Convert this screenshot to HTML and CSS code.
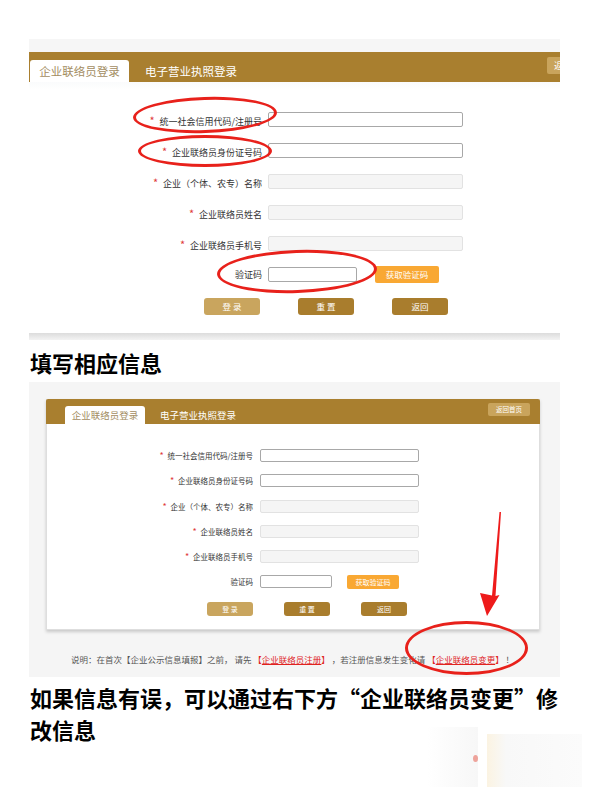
FILE: index.html
```html
<!DOCTYPE html>
<html lang="zh-CN">
<head>
  <meta charset="UTF-8">
  <meta name="viewport" content="width=device-width, initial-scale=1.0">
  <title>企业联络员登录</title>
  <link rel="stylesheet" href="styles.css">
</head>
<body>
  <div class="page">

    <!-- first screenshot: login form -->
    <div class="shot login">
      <div class="login-top"></div>
      <div class="bar">
        <div class="tab active">企业联络员登录</div>
        <div class="tab">电子营业执照登录</div>
        <div class="bar-btn">返回首页</div>
      </div>
      <div class="form">
        <div class="row"><label><i>*</i>统一社会信用代码/注册号</label><span class="field"></span></div>
        <div class="row"><label><i>*</i>企业联络员身份证号码</label><span class="field"></span></div>
        <div class="row"><label><i>*</i>企业（个体、农专）名称</label><span class="field off"></span></div>
        <div class="row"><label><i>*</i>企业联络员姓名</label><span class="field off"></span></div>
        <div class="row"><label><i>*</i>企业联络员手机号</label><span class="field off"></span></div>
        <div class="row"><label>验证码</label><span class="field short"></span><span class="code-btn">获取验证码</span></div>
        <div class="actions">
          <span class="btn light">登 录</span>
          <span class="btn">重 置</span>
          <span class="btn">返回</span>
        </div>
      </div>
      <div class="login-bottom"></div>

      <span class="ring ring-a"></span>
      <span class="ring ring-b"></span>
      <span class="ring ring-c"></span>
    </div>

    <h2 class="caption first">填写相应信息</h2>

    <!-- second screenshot: card with note -->
    <div class="shot panel">
      <div class="card">
        <div class="bar">
          <div class="tab active">企业联络员登录</div>
          <div class="tab">电子营业执照登录</div>
          <div class="bar-btn">返回首页</div>
        </div>
        <div class="form">
          <div class="row"><label><i>*</i>统一社会信用代码/注册号</label><span class="field"></span></div>
          <div class="row"><label><i>*</i>企业联络员身份证号码</label><span class="field"></span></div>
          <div class="row"><label><i>*</i>企业（个体、农专）名称</label><span class="field off"></span></div>
          <div class="row"><label><i>*</i>企业联络员姓名</label><span class="field off"></span></div>
          <div class="row"><label><i>*</i>企业联络员手机号</label><span class="field off"></span></div>
          <div class="row"><label>验证码</label><span class="field short"></span><span class="code-btn">获取验证码</span></div>
          <div class="actions">
            <span class="btn light">登 录</span>
            <span class="btn">重 置</span>
            <span class="btn">返回</span>
          </div>
        </div>
      </div>
      <p class="note">说明：在首次【企业公示信息填报】之前， 请先 <span class="link">【<u>企业联络员注册</u>】</span> ，若注册信息发生变化请 <span class="link">【<u>企业联络员变更</u>】</span> ！</p>

      <svg class="arrow" width="60" height="115" viewBox="0 0 60 115">
        <polygon points="51,7 45.5,91 49.5,90 37,111 30,88 42,90.5 49.5,7" fill="#ee1b1b"/>
      </svg>
      <span class="ring ring-d"></span>
    </div>

    <h2 class="caption">如果信息有误，可以通过右下方“企业联络员变更”修<br>改信息</h2>

    <div class="photo">
      <div class="photo-a"><span class="dot"></span></div>
      <div class="photo-b"></div>
    </div>

  </div>
</body>
</html>
```

FILE: styles.css
```css
body {
  margin: 0;
  background-color: #fff;
  color: #333;
  font-family: "Noto Sans CJK SC", "Liberation Sans", sans-serif;
}
.page {
  width: 531px;
  padding: 39px 0 0 29px;
}
.shot {
  position: relative;
}
.bar {
  display: flex;
  align-items: flex-end;
  background-color: #a97f2f;
}
.tab {
  color: #fff;
  white-space: nowrap;
}
.tab.active {
  background-color: #fff;
  color: #a38d62;
  text-align: center;
  border-radius: 3px 3px 0 0;
}
.bar-btn {
  align-self: flex-start;
  margin-left: auto;
  background-color: #c9a45c;
  color: #fff;
  text-align: center;
  border-radius: 2px;
  white-space: nowrap;
}
.row {
  display: flex;
  align-items: center;
}
.row label {
  text-align: right;
  white-space: nowrap;
  color: #333;
}
.row label i {
  font-style: normal;
  color: #e03a3a;
  display: inline-block;
}
.field {
  display: block;
  box-sizing: border-box;
  background-color: #fff;
  border: 1px solid #a8a8a8;
  border-radius: 2px;
}
.field.off {
  background-color: #f5f5f5;
  border-color: #e2e2e2;
}
.code-btn {
  background-color: #f9a833;
  color: #fff;
  text-align: center;
  border-radius: 2px;
}
.actions {
  display: flex;
}
.btn {
  background-color: #a97d2d;
  color: #fff;
  text-align: center;
  border-radius: 3px;
  white-space: pre;
}
.btn.light {
  background-color: #c9a55e;
}

/* first screenshot */
.login {
  overflow: hidden;
  background-color: #fff;
}
.login-top {
  height: 13px;
  background-color: #f6f6f6;
}
.login .bar {
  height: 30px;
  padding-left: 1px;
}
.login .tab {
  height: 22px;
  line-height: 22px;
  font-size: 11.5px;
}
.login .tab.active {
  width: 99px;
}
.login .tab + .tab {
  margin-left: 16px;
}
.login .bar-btn {
  width: 50px;
  height: 17px;
  line-height: 17px;
  margin-top: 5px;
  margin-right: -37px;
  font-size: 9px;
}
.login .form {
  display: flex;
  flex-direction: column;
  gap: 14px;
  padding: 29px 0 18px;
  background: linear-gradient(#fafbfc, #fff 8px);
}
.login .row {
  height: 17px;
  gap: 6px;
}
.login .row label {
  width: 233px;
  font-size: 9px;
}
.login .row label i {
  width: 10px;
  font-size: 11px;
  text-align: left;
}
.login .field {
  width: 195px;
  height: 15px;
}
.login .field.short {
  width: 89px;
}
.login .code-btn {
  width: 64px;
  height: 17px;
  line-height: 17px;
  margin-left: 12px;
  font-size: 8.5px;
}
.login .actions {
  gap: 38px;
  margin-top: 1px;
  padding-left: 175px;
}
.login .btn {
  width: 56px;
  height: 17px;
  line-height: 17px;
  font-size: 8.5px;
}
.login-bottom {
  height: 7px;
  background: linear-gradient(#dcdcdc, #f3f3f3);
}

/* captions */
.caption {
  margin: 4px 0 2px 1px;
  font-size: 22px;
  line-height: 32px;
  font-weight: 700;
  color: #000;
}
.caption.first {
  margin-top: 6px;
  margin-bottom: 4px;
}

/* second screenshot */
.panel {
  background-color: #f5f5f5;
  padding: 17px 0 12px;
}
.card {
  width: 494px;
  height: 231px;
  box-sizing: border-box;
  margin-left: 17px;
  background-color: #fff;
  border: 1px solid #dedede;
  border-top: none;
  box-shadow: 0 2px 3px rgba(0, 0, 0, 0.18);
}
.panel .bar {
  height: 25px;
  padding: 0 10px 0 19px;
  margin: 0 -1px;
  border-radius: 2px 2px 0 0;
}
.panel .tab {
  height: 18px;
  line-height: 18px;
  font-size: 9.5px;
}
.panel .tab.active {
  width: 80px;
}
.panel .tab + .tab {
  margin-left: 15px;
}
.panel .bar-btn {
  width: 42px;
  height: 13px;
  line-height: 13px;
  margin-top: 4px;
  font-size: 6.5px;
}
.panel .form {
  display: flex;
  flex-direction: column;
  gap: 10.3px;
  padding-top: 24px;
}
.panel .row {
  height: 15px;
  gap: 7px;
}
.panel .row label {
  width: 206px;
  font-size: 7.5px;
}
.panel .row label i {
  width: 8px;
  font-size: 9px;
  text-align: left;
}
.panel .field {
  width: 159px;
  height: 13px;
}
.panel .field.short {
  width: 72px;
}
.panel .code-btn {
  width: 52px;
  height: 14px;
  line-height: 14px;
  margin-left: 8px;
  font-size: 7px;
}
.panel .actions {
  gap: 31px;
  margin-top: 2.5px;
  padding-left: 160px;
}
.panel .btn {
  width: 46px;
  height: 14px;
  line-height: 14px;
  font-size: 7px;
}
.note {
  margin: 23px 0 0 42px;
  font-size: 8.5px;
  line-height: 12px;
  color: #555;
  white-space: nowrap;
}
.note .link {
  color: #e0231f;
}

/* red annotations */
.ring {
  position: absolute;
  box-sizing: border-box;
  border: 3px solid #e8211b;
  border-radius: 50%;
}
.ring-a {
  left: 104px;
  top: 58px;
  width: 144px;
  height: 36px;
  transform: rotate(-2deg);
}
.ring-b {
  left: 109px;
  top: 96px;
  width: 134px;
  height: 32px;
}
.ring-c {
  left: 188px;
  top: 211px;
  width: 160px;
  height: 43px;
  transform: rotate(-2deg);
}
.ring-d {
  left: 376px;
  top: 239px;
  width: 123px;
  height: 54px;
}
.arrow {
  position: absolute;
  left: 421px;
  top: 123px;
}

/* faint picture at the bottom */
.photo {
  display: flex;
  align-items: flex-start;
  gap: 9px;
  width: 155px;
  margin: -20px 0 0 398px;
}
.photo-a {
  position: relative;
  flex-shrink: 0;
  width: 51px;
  height: 60px;
  background: linear-gradient(90deg, #fff, #f7f7f7);
}
.photo-b {
  flex-shrink: 0;
  width: 95px;
  height: 53px;
  margin-top: 7px;
  background: linear-gradient(90deg, #fbf3e2, #f8f8f8 20%, #fbfbfb);
}
.dot {
  position: absolute;
  right: 0;
  top: 28px;
  width: 5px;
  height: 7px;
  border-radius: 50%;
  background-color: #eea39b;
}
```
